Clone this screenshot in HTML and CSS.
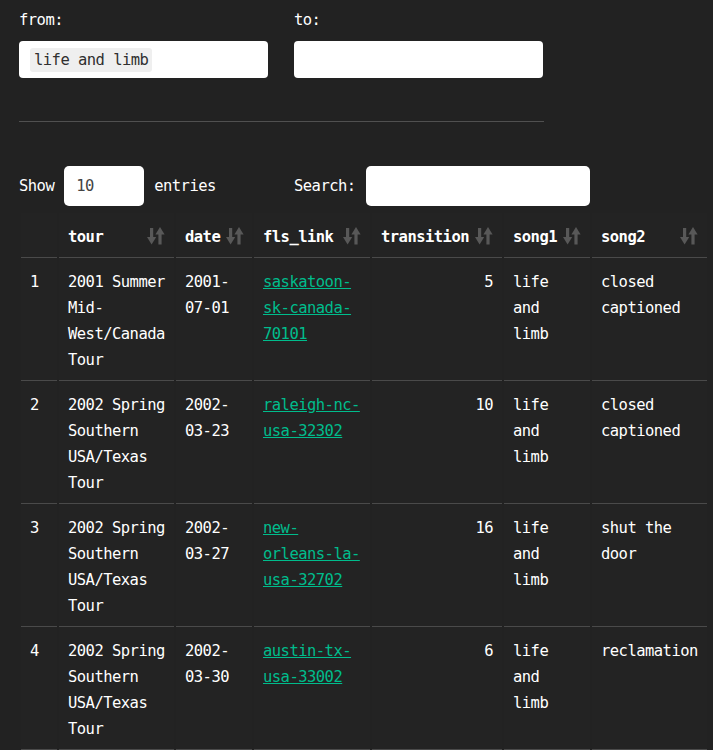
FILE: index.html
```html
<!DOCTYPE html>
<html>
<head>
<meta charset="utf-8">
<link rel="stylesheet" href="styles.css">
</head>
<body>
<div class="page">
  <div class="filters">
    <div class="field">
      <label class="label">from:</label>
      <div class="selectbox"><span class="pill">life and limb</span></div>
    </div>
    <div class="field">
      <label class="label">to:</label>
      <div class="selectbox"></div>
    </div>
  </div>
  <hr class="rule">
  <div class="controls">
    <div class="length">
      <span>Show</span>
      <select class="len-select"><option>10</option></select>
      <span>entries</span>
    </div>
    <div class="search">
      <span>Search:</span>
      <input class="search-input" type="text">
    </div>
  </div>
  <table class="grid">
    <thead>
      <tr>
        <th class="c-idx"></th>
        <th class="c-tour"><div class="th-in"><span>tour</span><svg class="sort" viewBox="0 0 18 18"><rect x="3" y="1" width="3.2" height="10"/><polygon points="0,10 9.2,10 4.6,17.5"/><polygon points="8.4,7.5 17.6,7.5 13,0"/><rect x="11.4" y="7" width="3.2" height="10.5"/></svg></div></th>
        <th class="c-date"><div class="th-in"><span>date</span><svg class="sort" viewBox="0 0 18 18"><rect x="3" y="1" width="3.2" height="10"/><polygon points="0,10 9.2,10 4.6,17.5"/><polygon points="8.4,7.5 17.6,7.5 13,0"/><rect x="11.4" y="7" width="3.2" height="10.5"/></svg></div></th>
        <th class="c-link"><div class="th-in"><span>fls_link</span><svg class="sort" viewBox="0 0 18 18"><rect x="3" y="1" width="3.2" height="10"/><polygon points="0,10 9.2,10 4.6,17.5"/><polygon points="8.4,7.5 17.6,7.5 13,0"/><rect x="11.4" y="7" width="3.2" height="10.5"/></svg></div></th>
        <th class="c-trans"><div class="th-in"><span>transition</span><svg class="sort" viewBox="0 0 18 18"><rect x="3" y="1" width="3.2" height="10"/><polygon points="0,10 9.2,10 4.6,17.5"/><polygon points="8.4,7.5 17.6,7.5 13,0"/><rect x="11.4" y="7" width="3.2" height="10.5"/></svg></div></th>
        <th class="c-s1"><div class="th-in"><span>song1</span><svg class="sort" viewBox="0 0 18 18"><rect x="3" y="1" width="3.2" height="10"/><polygon points="0,10 9.2,10 4.6,17.5"/><polygon points="8.4,7.5 17.6,7.5 13,0"/><rect x="11.4" y="7" width="3.2" height="10.5"/></svg></div></th>
        <th class="c-s2"><div class="th-in"><span>song2</span><svg class="sort" viewBox="0 0 18 18"><rect x="3" y="1" width="3.2" height="10"/><polygon points="0,10 9.2,10 4.6,17.5"/><polygon points="8.4,7.5 17.6,7.5 13,0"/><rect x="11.4" y="7" width="3.2" height="10.5"/></svg></div></th>
      </tr>
    </thead>
    <tbody>
      <tr>
        <td>1</td>
        <td>2001 Summer Mid-West/Canada Tour</td>
        <td>2001-07-01</td>
        <td><a href="#">saskatoon-sk-canada-70101</a></td>
        <td class="num">5</td>
        <td>life and limb</td>
        <td>closed captioned</td>
      </tr>
      <tr>
        <td>2</td>
        <td>2002 Spring Southern USA/Texas Tour</td>
        <td>2002-03-23</td>
        <td><a href="#">raleigh-nc-usa-32302</a></td>
        <td class="num">10</td>
        <td>life and limb</td>
        <td>closed captioned</td>
      </tr>
      <tr>
        <td>3</td>
        <td>2002 Spring Southern USA/Texas Tour</td>
        <td>2002-03-27</td>
        <td><a href="#">new-orleans-la-usa-32702</a></td>
        <td class="num">16</td>
        <td>life and limb</td>
        <td>shut the door</td>
      </tr>
      <tr>
        <td>4</td>
        <td>2002 Spring Southern USA/Texas Tour</td>
        <td>2002-03-30</td>
        <td><a href="#">austin-tx-usa-33002</a></td>
        <td class="num">6</td>
        <td>life and limb</td>
        <td>reclamation</td>
      </tr>
    </tbody>
  </table>
</div>
</body>
</html>
```
FILE: styles.css
```css
* { box-sizing: border-box; }
html, body {
  margin: 0;
  background: #222222;
}
body {
  font-family: "DejaVu Sans Mono", "Liberation Mono", monospace;
  font-size: 15.5px;
  letter-spacing: -0.53px;
  line-height: 26px;
  color: #ffffff;
}
.page {
  padding: 7px 0 0 19px;
}
.filters {
  display: flex;
  gap: 26px;
  width: 525px;
}
.field {
  display: flex;
  flex-direction: column;
  width: 249px;
}
.label {
  display: block;
  margin-bottom: 8px;
}
.selectbox {
  height: 37px;
  background: #ffffff;
  border-radius: 4px;
  padding: 7px 11px;
  display: flex;
  align-items: center;
}
.pill {
  background: #efefef;
  color: #303030;
  border-radius: 3px;
  padding: 0 4px;
  line-height: 24px;
}
.rule {
  width: 525px;
  margin: 43px 0 0 0;
  border: 0;
  border-top: 1px solid #505050;
  height: 0;
}
.controls {
  display: flex;
  align-items: center;
  margin-top: 44px;
  height: 40px;
}
.length {
  display: flex;
  align-items: center;
  gap: 10px;
  width: 275px;
}
.len-select {
  appearance: none;
  -webkit-appearance: none;
  width: 80px;
  height: 40px;
  border: 0;
  border-radius: 5px;
  background: #ffffff;
  color: #444444;
  font-family: inherit;
  font-size: 15.5px;
  letter-spacing: -0.53px;
  padding: 0 12px;
  margin: 0;
}
.search {
  display: flex;
  align-items: center;
  gap: 10px;
}
.search-input {
  width: 224px;
  height: 40px;
  border: 0;
  border-radius: 5px;
  background: #ffffff;
  margin: 0;
  padding: 0 10px;
  font-family: inherit;
}
.grid {
  margin-top: 7px;
  border-collapse: separate;
  border-spacing: 2px 0;
  table-layout: fixed;
  width: 690px;
  margin-left: 0;
}
.grid th, .grid td {
  padding: 11px 9px 7px 9px;
  vertical-align: top;
  text-align: left;
  background: #232323;
}
.grid th {
  font-weight: bold;
  border-bottom: 1px solid #4a4a4a;
}
.grid td {
  border-bottom: 1px solid #4a4a4a;
}
.grid td.num {
  text-align: right;
}
.th-in {
  display: flex;
  justify-content: space-between;
  align-items: center;
  gap: 6px;
}
.sort {
  width: 18px;
  height: 18px;
  fill: #585858;
  flex: none;
  margin-top: -3px;
}
.c-idx { width: 36px; }
.c-tour { width: 115px; }
.c-date { width: 76px; }
.c-link { width: 116px; }
.c-trans { width: 130px; }
.c-s1 { width: 86px; }
.c-s2 { width: 115px; }
.grid a {
  color: #00bc8c;
  text-decoration: underline;
}
```
